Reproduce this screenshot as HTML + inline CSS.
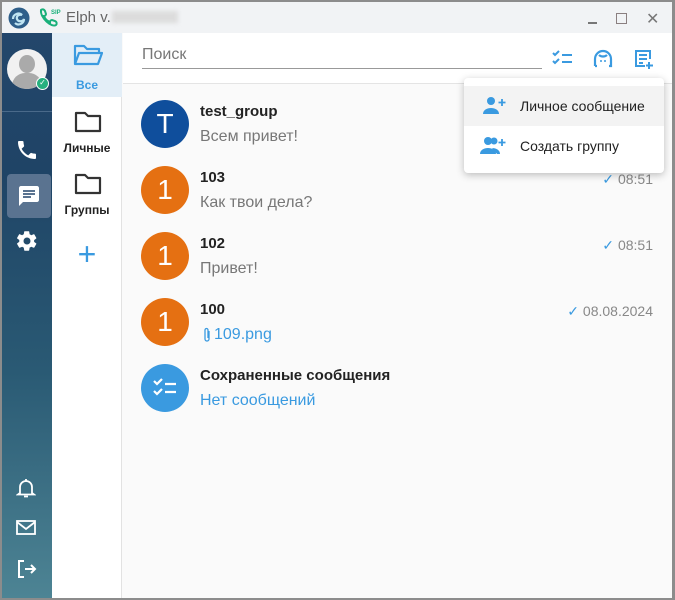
<!DOCTYPE html>
<html><head><meta charset="utf-8">
<style>
*{margin:0;padding:0;box-sizing:border-box}
body{width:675px;height:600px;background:#8c8c8c;font-family:"Liberation Sans",sans-serif;position:relative;overflow:hidden}
.win{position:absolute;left:2px;top:2px;width:670px;height:596px;background:#fafafa;overflow:hidden}
.title{position:absolute;left:0;top:0;width:670px;height:31px;background:#f1f3f5}
.side{position:absolute;left:0;top:31px;width:50px;height:565px;background:linear-gradient(180deg,#23466b 0%,#1f4466 25%,#2a5a74 60%,#4d8494 100%)}
.folders{position:absolute;left:50px;top:31px;width:70px;height:565px;background:#fff;border-right:1px solid #e2e2e2}
.main{position:absolute;left:121px;top:31px;width:549px;height:565px;background:#fafafa}
.hdr{position:absolute;left:0;top:0;width:549px;height:51px;background:#fff;border-bottom:1px solid #e4e4e4}
.av{position:absolute;left:18px;width:48px;height:48px;border-radius:50%;color:#fff;font-size:28px;text-align:center;line-height:48px}
.nm{position:absolute;left:77px;font-size:15px;font-weight:bold;color:#222}
.ms{position:absolute;left:77px;font-size:16px;color:#777}
.tm{position:absolute;right:19px;font-size:14px;color:#888}
.tm b{color:#3a9ae0;font-weight:normal;margin-right:4px}
.fl{position:absolute;width:70px;text-align:center;font-size:12px;font-weight:bold;color:#222}
.menu{position:absolute;left:462px;top:76px;width:200px;height:95px;background:#fff;border-radius:4px;box-shadow:0 2px 8px rgba(0,0,0,.25)}
.mi{position:absolute;left:0;width:200px;height:40px;font-size:14px;color:#222;line-height:40px;padding-left:56px}
</style></head><body>
<div class="win">
<div class="title">
 <svg style="position:absolute;left:6px;top:5px" width="22" height="22" viewBox="0 0 22 22"><circle cx="11" cy="11" r="10.5" fill="#2f5f8a"/><path d="M5 12c0-5 6-7 9-4-3-1-6 1-5 4 1 3 6 3 7 0 0 5-6 7-9 4" fill="none" stroke="#bfe4f2" stroke-width="2.2"/></svg>
 <svg style="position:absolute;left:35px;top:5px" width="24" height="22" viewBox="0 0 24 22"><path d="M4 3c1-1 3-1 4 1l1 3c0 1-1 2-2 2 1 3 3 5 6 6 0-1 1-2 2-2l3 1c2 1 2 3 1 4-4 3-16-7-15-15z" fill="none" stroke="#1ab07a" stroke-width="2"/><text x="14" y="7" font-size="6" font-weight="bold" fill="#1ab07a" font-family="Liberation Sans">SIP</text></svg>
 <div style="position:absolute;left:64px;top:7px;font-size:15px;color:#666">Elph v.</div>
 <div style="position:absolute;left:110px;top:9px;width:66px;height:12px;background:#dcdcdc;filter:blur(2px)"></div>
 <div style="position:absolute;left:586px;top:20px;width:9px;height:1.5px;background:#777"></div>
 <div style="position:absolute;left:614px;top:11px;width:11px;height:11px;border:1.5px solid #8a7f80"></div>
 <div style="position:absolute;left:644px;top:7px;font-size:16px;color:#777">✕</div>
</div>
<div class="side">
 <div style="position:absolute;left:5px;top:16px;width:40px;height:40px;border-radius:50%;background:#f1f1f1;overflow:hidden">
  <div style="position:absolute;left:12px;top:6px;width:16px;height:18px;border-radius:50%;background:#aaa"></div>
  <div style="position:absolute;left:5px;top:24px;width:30px;height:22px;border-radius:13px 13px 0 0;background:#aaa"></div>
 </div>
 <div style="position:absolute;left:34px;top:44px;width:13px;height:13px;border-radius:50%;background:#26b07f;border:1.5px solid #fff;color:#fff;font-size:8px;text-align:center;line-height:10px">✓</div>
 <div style="position:absolute;left:0;top:78px;width:50px;height:1px;background:#4a6a8a"></div>
 <svg style="position:absolute;left:13px;top:105px" width="24" height="24" viewBox="0 0 24 24"><path d="M6.6 10.8c1.4 2.8 3.8 5.1 6.6 6.6l2.2-2.2c.3-.3.7-.4 1-.2 1.1.4 2.300.6 3.6.6.6 0 1 .4 1 1V20c0 .6-.4 1-1 1C10.6 21 3 13.4 3 4c0-.6.4-1 1-1h3.5c.6 0 1 .4 1 1 0 1.3.2 2.5.6 3.600.1.3 0 .7-.2 1z" fill="#fff"/></svg>
 <div style="position:absolute;left:5px;top:141px;width:44px;height:44px;border-radius:4px;background:#5a7390"></div>
 <svg style="position:absolute;left:15px;top:151px" width="24" height="24" viewBox="0 0 24 24"><path d="M20 2H4c-1.1 0-2 .9-2 2v18l4-4h14c1.1 0 2-.9 2-2V4c0-1.1-.9-2-2-2zM6 9h12v2H6zm8 5H6v-2h8zm4-6H6V6h12z" fill="#fff"/></svg>
 <svg style="position:absolute;left:13px;top:196px" width="24" height="24" viewBox="0 0 24 24"><path d="M19.1 12.9a7 7 0 0 0 0-1.8l2.1-1.6c.2-.2.2-.4.1-.6l-2-3.5c-.1-.2-.4-.3-.6-.2l-2.5 1a7 7 0 0 0-1.6-.9L14.2 2.6c0-.2-.2-.4-.5-.4h-4c-.2 0-.4.2-.5.4l-.4 2.7c-.6.2-1.1.5-1.600.9l-2.5-1c-.2-.1-.5 0-.6.2l-2 3.5c-.1.2-.1.4.1.6L4.3 11a7 7 0 0 0 0 1.8l-2.1 1.6c-.2.2-.2.4-.1.6l2 3.5c.1.2.4.3.6.2l2.5-1c.5.4 1 .7 1.6.9l.4 2.7c0 .2.2.4.5.4h4c.2 0 .4-.2.5-.4l.4-2.7c.6-.2 1.1-.5 1.6-.9l2.5 1c.2.1.5 0 .6-.2l2-3.5c.1-.2.1-.4-.1-.6zM12 15.5a3.5 3.5 0 1 1 0-7 3.5 3.5 0 0 1 0 7z" fill="#fff"/></svg>
 <svg style="position:absolute;left:14px;top:444px" width="20" height="22" viewBox="0 0 20 22"><path d="M4 16V10a6 6 0 0 1 12 0v6l2 1.5H2zM10 2v2M8 19.5h4" fill="none" stroke="#fff" stroke-width="1.8"/></svg>
 <svg style="position:absolute;left:13px;top:486px" width="22" height="18" viewBox="0 0 22 18"><rect x="2" y="2" width="18" height="13" fill="none" stroke="#fff" stroke-width="1.8"/><path d="M2 3l9 7 9-7" fill="none" stroke="#fff" stroke-width="1.8"/></svg>
 <svg style="position:absolute;left:14px;top:526px" width="22" height="20" viewBox="0 0 22 20"><path d="M8 2H3v16h5M9 10h10M15 6l4 4-4 4" fill="none" stroke="#fff" stroke-width="2"/></svg>
</div>
<div class="folders">
 <div style="position:absolute;left:0;top:0;width:70px;height:64px;background:#e3eef7"></div>
 <svg style="position:absolute;left:21px;top:10px" width="30" height="24" viewBox="0 0 30 24"><path d="M2 21V3h9l3 3h12v4M2 21l4-11h23l-4 11z" fill="none" stroke="#3a9ae0" stroke-width="2.2" stroke-linejoin="round"/></svg>
 <div class="fl" style="top:45px;color:#3a9ae0">Все</div>
 <svg style="position:absolute;left:22px;top:77px" width="28" height="24" viewBox="0 0 28 24"><path d="M2 21V3h9l3 3h12v15z" fill="none" stroke="#333" stroke-width="2.2" stroke-linejoin="round"/></svg>
 <div class="fl" style="top:108px">Личные</div>
 <svg style="position:absolute;left:22px;top:139px" width="28" height="24" viewBox="0 0 28 24"><path d="M2 21V3h9l3 3h12v15z" fill="none" stroke="#333" stroke-width="2.2" stroke-linejoin="round"/></svg>
 <div class="fl" style="top:170px">Группы</div>
 <div style="position:absolute;left:0;top:203px;width:70px;text-align:center;font-size:32px;color:#3a9ae0;font-weight:300">+</div>
</div>
<div class="main">
 <div class="hdr">
  <div style="position:absolute;left:19px;top:13px;font-size:16px;color:#777">Поиск</div>
  <div style="position:absolute;left:19px;top:35px;width:400px;height:1px;background:#999"></div>
  <svg style="position:absolute;left:428px;top:16px" width="24" height="20" viewBox="0 0 24 20"><path d="M2 4l2 2 4-4M2 12l2 2 4-4M11 6h10M11 13h10" fill="none" stroke="#3a9ae0" stroke-width="2"/></svg>
  <svg style="position:absolute;left:468px;top:14px" width="24" height="24" viewBox="0 0 24 24"><path d="M4 19v-7a8 8 0 0 1 16 0v7h-2M4 19h2M8 8c2 2 6 2 8 0" fill="none" stroke="#3a9ae0" stroke-width="2.2"/><circle cx="10" cy="14" r="1" fill="#3a9ae0"/><circle cx="14" cy="14" r="1" fill="#3a9ae0"/></svg>
  <svg style="position:absolute;left:509px;top:14px" width="24" height="24" viewBox="0 0 24 24"><path d="M13 19H4V4h14v8M7 8h8M7 12h8M7 16h4M17 15v7M14 18.5h7" fill="none" stroke="#3a9ae0" stroke-width="2"/></svg>
 </div>
 <div class="av" style="top:67px;background:#0f4e9c">T</div>
 <div class="nm" style="top:70px">test_group</div>
 <div class="ms" style="top:95px">Всем привет!</div>
 <div class="av" style="top:133px;background:#e57012">1</div>
 <div class="nm" style="top:136px">103</div>
 <div class="ms" style="top:161px">Как твои дела?</div>
 <div class="tm" style="top:138px"><b>✓</b>08:51</div>
 <div class="av" style="top:199px;background:#e57012">1</div>
 <div class="nm" style="top:202px">102</div>
 <div class="ms" style="top:227px">Привет!</div>
 <div class="tm" style="top:204px"><b>✓</b>08:51</div>
 <div class="av" style="top:265px;background:#e57012">1</div>
 <div class="nm" style="top:268px">100</div>
 <svg style="position:absolute;left:79px;top:294px" width="10" height="16" viewBox="0 0 10 16"><path d="M7 4v8a2 2 0 0 1-4 0V3a1.5 1.5 0 0 1 3 0v8" fill="none" stroke="#3a9ae0" stroke-width="1.3"/></svg>
 <div class="ms" style="top:293px;left:91px;color:#3a9ae0">109.png</div>
 <div class="tm" style="top:270px"><b>✓</b>08.08.2024</div>
 <div class="av" style="top:331px;background:#3a9ae0"><svg style="margin-top:12px" width="28" height="24" viewBox="0 0 28 24"><path d="M3 5l3 3 5-5M3 15l3 3 5-5M14 8h11M14 16h11" fill="none" stroke="#fff" stroke-width="2.2"/></svg></div>
 <div class="nm" style="top:334px">Сохраненные сообщения</div>
 <div class="ms" style="top:359px;color:#3a9ae0">Нет сообщений</div>
</div>
<div class="menu">
 <div class="mi" style="top:8px;background:#f3f3f3">Личное сообщение</div>
 <svg style="position:absolute;left:18px;top:18px" width="24" height="20" viewBox="0 0 24 20"><circle cx="9" cy="5" r="4" fill="#3a9ae0"/><path d="M1 18c0-4 4-6 8-6s8 2 8 6z" fill="#3a9ae0"/><path d="M20 3v7M16.5 6.5h7" stroke="#3a9ae0" stroke-width="1.8"/></svg>
 <div class="mi" style="top:48px">Создать группу</div>
 <svg style="position:absolute;left:16px;top:58px" width="26" height="20" viewBox="0 0 26 20"><circle cx="8" cy="5" r="4" fill="#3a9ae0"/><circle cx="14" cy="5" r="3.5" fill="#3a9ae0"/><path d="M0 18c0-4 4-6 8-6s8 2 8 6zM12 12c4 0 8 2 8 6h-3z" fill="#3a9ae0"/><path d="M22 3v7M18.5 6.5h7" stroke="#3a9ae0" stroke-width="1.8"/></svg>
</div>
</div>
</body></html>
